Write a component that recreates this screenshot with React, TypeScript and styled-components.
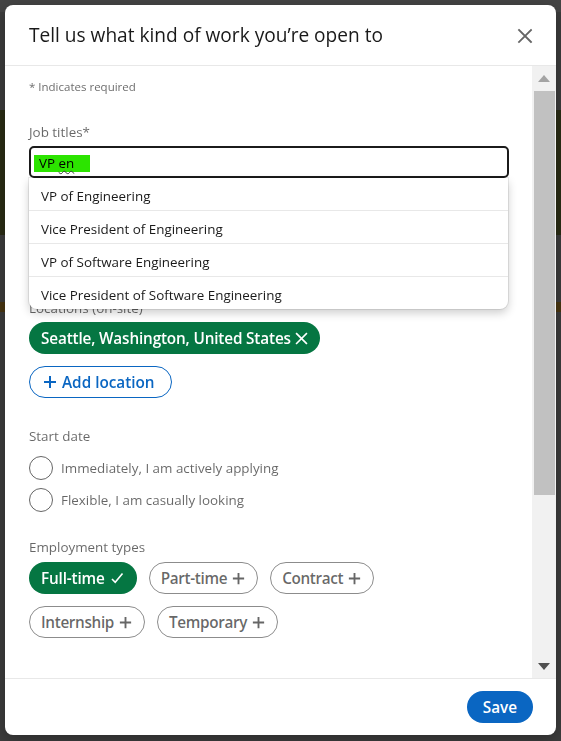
import React from 'react'
import styled, { createGlobalStyle } from 'styled-components'

const GlobalStyle = createGlobalStyle`
  html, body { margin: 0; height: 100%; }
  body {
    background: #3d3d3d;
    font-family: "Open Sans", "Liberation Sans", Arial, sans-serif;
    overflow: hidden;
  }
  * { box-sizing: border-box; }
`

// the dimmed page that sits behind the dialog
const Page = styled.div`
  display: flex;
  flex-direction: column;
  height: 100vh;
`

const Band = styled.div<{ $h: number; $bg: string }>`
  flex: none;
  height: ${p => p.$h}px;
  background: ${p => p.$bg};
`

const Dialog = styled.div`
  position: fixed;
  top: 5px;
  left: 5px;
  width: 551px;
  height: 730px;
  display: flex;
  flex-direction: column;
  background: #fff;
  border-radius: 8px;
  overflow: hidden;
  box-shadow: 0 4px 16px rgba(0, 0, 0, 0.3);
`

const Header = styled.header`
  flex: none;
  height: 61px;
  display: flex;
  align-items: center;
  justify-content: space-between;
  padding: 0 23px 0 24px;
  border-bottom: 1px solid #e8e8e8;
`

const Title = styled.h2`
  margin: 0;
  font-size: 19.1px;
  font-weight: 400;
  line-height: 24px;
  color: rgba(0, 0, 0, 0.9);
`

const IconButton = styled.button`
  display: flex;
  padding: 0;
  border: none;
  background: none;
  color: #666;
  margin-top: 2px;
`

const Body = styled.div`
  flex: 1;
  min-height: 0;
  display: flex;
`

const Content = styled.div`
  flex: 1;
  overflow: hidden;
  padding: 13px 23px 0 24px;
`

const ScrollTrack = styled.div`
  flex: none;
  width: 24px;
  display: flex;
  flex-direction: column;
  background: #f1f1f1;
`

const ScrollArrow = styled.div<{ $dark?: boolean }>`
  flex: none;
  height: 24px;
  display: flex;
  align-items: center;
  justify-content: center;
  color: ${p => (p.$dark ? '#505050' : '#a3a3a3')};
`

const Thumb = styled.div`
  flex: none;
  height: 404px;
  margin: 1px 1px 0 2px;
  background: #c1c1c1;
`

const ScrollGap = styled.div`
  flex: 1;
`

const Footer = styled.footer`
  flex: none;
  height: 57px;
  display: flex;
  justify-content: flex-end;
  align-items: flex-start;
  padding: 12px 23px 0;
  border-top: 1px solid #e8e8e8;
`

const Hint = styled.div`
  font-size: 11.5px;
  line-height: 16px;
  color: rgba(0, 0, 0, 0.6);
`

const Section = styled.section<{ $mt: number }>`
  margin-top: ${p => p.$mt}px;
`

const Label = styled.div`
  font-size: 13.4px;
  line-height: 20px;
  color: rgba(0, 0, 0, 0.6);
`

const InputWrap = styled.div`
  position: relative;
  margin-top: 4px;
`

const FakeInput = styled.div`
  height: 32px;
  display: flex;
  align-items: center;
  padding: 2px 3px 0;
  border: 2px solid #1b1b1b;
  border-radius: 5px;
`

const Typed = styled.span`
  display: inline-block;
  height: 17px;
  padding: 0 16px 0 5px;
  background: #2ce400;
  font-size: 13.4px;
  line-height: 17px;
  color: #000;
`

const Squiggle = styled.span`
  text-decoration: underline wavy #3c3c3c;
  text-decoration-thickness: 1px;
  text-underline-offset: 2px;
`

const Suggestions = styled.ul`
  position: absolute;
  top: 100%;
  left: 0;
  right: 1px;
  z-index: 2;
  margin: 0;
  padding: 0;
  list-style: none;
  background: #fff;
  border-radius: 0 0 8px 8px;
  box-shadow: 0 0 0 1px rgba(0, 0, 0, 0.08), 0 4px 10px rgba(0, 0, 0, 0.2);
`

const Suggestion = styled.li`
  height: 33px;
  display: flex;
  align-items: center;
  padding: 3px 12px 0;
  border-top: 1px solid #e8e8e8;
  font-size: 13.4px;
  color: rgba(0, 0, 0, 0.9);

  &:first-child {
    height: 32px;
    border-top: none;
  }
`

const PillRow = styled.div<{ $mt: number; $max?: number }>`
  display: flex;
  flex-wrap: wrap;
  gap: 12px 12px;
  margin-top: ${p => p.$mt}px;
  max-width: ${p => (p.$max ? `${p.$max}px` : 'none')};
`

const Pill = styled.button<{ $on?: boolean }>`
  display: inline-flex;
  align-items: center;
  gap: 4px;
  height: 32px;
  padding: 0 ${p => (p.$on ? 12 : 11)}px;
  border-radius: 16px;
  border: ${p => (p.$on ? 'none' : '1px solid #8c8c8c')};
  background: ${p => (p.$on ? '#057642' : '#fff')};
  color: ${p => (p.$on ? '#fff' : 'rgba(0, 0, 0, 0.6)')};
  font-family: inherit;
  font-size: 15.3px;
  font-weight: 600;
  line-height: 20px;
  letter-spacing: ${p => (p.$on ? -0.15 : -0.35)}px;
  white-space: nowrap;
`

const OutlineButton = styled.button`
  display: inline-flex;
  align-items: center;
  gap: 4px;
  height: 32px;
  margin-top: 12px;
  padding: 0 16px 0 12px;
  border-radius: 16px;
  border: 1px solid #0a66c2;
  background: #fff;
  color: #0a66c2;
  font-family: inherit;
  font-size: 15.3px;
  font-weight: 600;
`

const RadioList = styled.div`
  margin-top: 6px;
`

const RadioRow = styled.label`
  height: 32px;
  display: flex;
  align-items: center;
  gap: 8px;
  font-size: 13.4px;
  color: rgba(0, 0, 0, 0.6);
`

const Circle = styled.span`
  flex: none;
  width: 24px;
  height: 24px;
  border-radius: 50%;
  border: 1px solid rgba(0, 0, 0, 0.6);
`

const SaveButton = styled.button`
  height: 32px;
  padding: 0 16px;
  border: none;
  border-radius: 16px;
  background: #0a66c2;
  color: #fff;
  font-family: inherit;
  font-size: 15.3px;
  font-weight: 600;
`

function CloseIcon({ size = 16, stroke = 1.8 }: { size?: number; stroke?: number }) {
  return (
    <svg width={size} height={size} viewBox="0 0 16 16" fill="none" stroke="currentColor" strokeWidth={stroke} strokeLinecap="square">
      <path d="M2 2L14 14M14 2L2 14" />
    </svg>
  )
}

function PlusIcon({ size = 16 }: { size?: number }) {
  return (
    <svg width={size} height={size} viewBox="0 0 16 16" fill="none" stroke="currentColor" strokeWidth={2}>
      <path d="M8 2v12M2 8h12" />
    </svg>
  )
}

function CheckIcon() {
  return (
    <svg width={16} height={16} viewBox="0 0 16 16" fill="none" stroke="currentColor" strokeWidth={1.6}>
      <path d="M3 9l3.2 3.3L13.5 3.5" />
    </svg>
  )
}

function Triangle({ up }: { up?: boolean }) {
  return (
    <svg width={12} height={7} viewBox="0 0 12 7" fill="currentColor">
      <path d={up ? 'M0 7L6 0L12 7Z' : 'M0 0L12 0L6 7Z'} />
    </svg>
  )
}

const suggestions = [
  'VP of Engineering',
  'Vice President of Engineering',
  'VP of Software Engineering',
  'Vice President of Software Engineering',
]

const employment = [
  { name: 'Full-time', on: true },
  { name: 'Part-time', on: false },
  { name: 'Contract', on: false },
  { name: 'Internship', on: false },
  { name: 'Temporary', on: false },
]

function Choice({ name, on }: { name: string; on: boolean }) {
  return (
    <Pill $on={on}>
      {name}
      {on ? <CheckIcon /> : <PlusIcon size={15} />}
    </Pill>
  )
}

export default function App() {
  return (
    <>
      <GlobalStyle />
      <Page>
        <Band $h={12} $bg="#454545" />
        <Band $h={98} $bg="#3d3d3d" />
        <Band $h={125} $bg="#2b2d15" />
        <Band $h={67} $bg="#3d3d3d" />
        <Band $h={10} $bg="#4a3712" />
      </Page>

      <Dialog role="dialog">
        <Header>
          <Title>Tell us what kind of work you’re open to</Title>
          <IconButton aria-label="Dismiss">
            <CloseIcon />
          </IconButton>
        </Header>

        <Body>
          <Content>
            <Hint>* Indicates required</Hint>

            <Section $mt={27}>
              <Label>Job titles*</Label>
              <InputWrap>
                <FakeInput>
                  <Typed>
                    VP <Squiggle>en</Squiggle>
                  </Typed>
                </FakeInput>
                <Suggestions>
                  {suggestions.map(s => (
                    <Suggestion key={s}>{s}</Suggestion>
                  ))}
                </Suggestions>
              </InputWrap>
            </Section>

            <Section $mt={120}>
              <Label>Locations (on-site)</Label>
              <PillRow $mt={4}>
                <Pill $on>
                  Seattle, Washington, United States
                  <CloseIcon size={13} stroke={2} />
                </Pill>
              </PillRow>
              <OutlineButton>
                <PlusIcon />
                Add location
              </OutlineButton>
            </Section>

            <Section $mt={28}>
              <Label>Start date</Label>
              <RadioList>
                <RadioRow>
                  <Circle />
                  Immediately, I am actively applying
                </RadioRow>
                <RadioRow>
                  <Circle />
                  Flexible, I am casually looking
                </RadioRow>
              </RadioList>
            </Section>

            <Section $mt={21}>
              <Label>Employment types</Label>
              <PillRow $mt={5} $max={440}>
                {employment.map(e => (
                  <Choice key={e.name} name={e.name} on={e.on} />
                ))}
              </PillRow>
            </Section>
          </Content>

          <ScrollTrack>
            <ScrollArrow>
              <Triangle up />
            </ScrollArrow>
            <Thumb />
            <ScrollGap />
            <ScrollArrow $dark>
              <Triangle />
            </ScrollArrow>
          </ScrollTrack>
        </Body>

        <Footer>
          <SaveButton>Save</SaveButton>
        </Footer>
      </Dialog>
    </>
  )
}
